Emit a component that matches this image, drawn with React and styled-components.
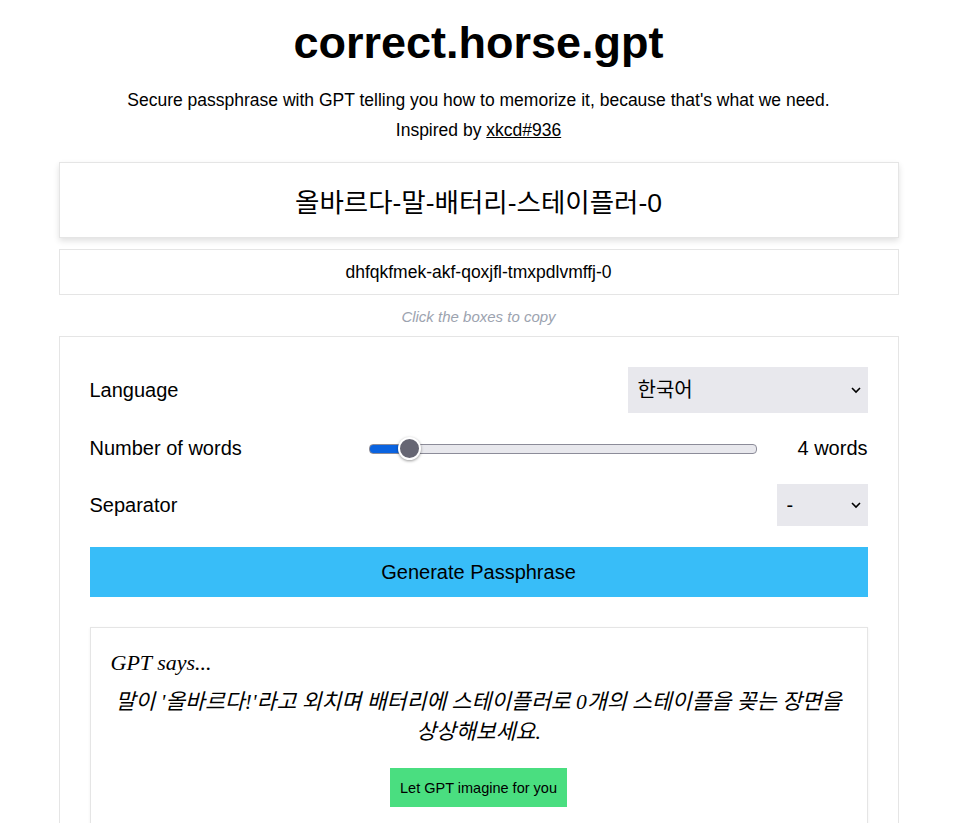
import { useState } from "react";
import styled, { createGlobalStyle } from "styled-components";

const GlobalStyle = createGlobalStyle`
  body {
    margin: 0;
    background: #fff;
    color: #000;
    font-family: "Liberation Sans", Arial, "Noto Sans CJK KR", sans-serif;
  }
`;

const Page = styled.div`
  width: 840px;
  margin-left: calc(50% - 423px);
  padding-top: 15px;
  text-align: center;
`;

const Title = styled.h1`
  font-size: 45px;
  font-weight: 700;
  margin: 0;
  line-height: 56px;
`;

const Subtitle = styled.p`
  font-size: 17.5px;
  margin: 14px 0 0;
  line-height: 30px;
`;

const Link = styled.a`
  color: #000;
  text-decoration: underline;
`;

const CopyBox = styled.div`
  border: 1px solid #e5e5e5;
  background: #fff;
  cursor: pointer;
  display: flex;
  align-items: center;
  justify-content: center;
  height: ${(p) => (p.$big ? "74px" : "44px")};
  font-size: ${(p) => (p.$big ? "26.5px" : "17.5px")};
  margin-top: ${(p) => (p.$big ? "17px" : "11px")};
  box-shadow: ${(p) => (p.$big ? "0 3px 6px rgba(0,0,0,0.12)" : "none")};
`;

const Hint = styled.p`
  font-size: 15px;
  line-height: 17px;
  font-style: italic;
  color: #9ca3af;
  margin: 13px 0 11px;
`;

const Panel = styled.div`
  border: 1px solid #e5e5e5;
  padding: 30px 30px 0;
  text-align: left;
`;

const Row = styled.div`
  display: flex;
  align-items: center;
  justify-content: space-between;
  gap: 24px;
  margin-bottom: ${(p) => p.$mb || "24px"};
  font-size: 20px;
`;

const Label = styled.label`
  flex: 0 0 auto;
`;

const Select = styled.select`
  appearance: none;
  border: none;
  background: #e8e8ed url("data:image/svg+xml,%3Csvg xmlns='http://www.w3.org/2000/svg' width='12' height='8' viewBox='0 0 12 8'%3E%3Cpath d='M2 2l4 4 4-4' fill='none' stroke='%23000' stroke-width='1.6'/%3E%3C/svg%3E") no-repeat right 6px center;
  font-family: "Liberation Sans", Arial, "Noto Sans CJK KR", sans-serif;
  font-size: 20px;
  color: #000;
  width: ${(p) => p.$w};
  height: ${(p) => p.$h};
  padding: 0 10px;
  outline: none;
`;

const SliderWrap = styled.div`
  display: flex;
  align-items: center;
  flex: 1;
  margin-left: 103px;
  gap: 40px;
`;

const Range = styled.input`
  appearance: none;
  flex: 1;
  height: 8px;
  margin: 0;
  border-radius: 4px;
  border: 1px solid #8c8c99;
  background: linear-gradient(to right, #0a63e0 0, #0a63e0 var(--fill), #e8e8ed var(--fill));
  &::-webkit-slider-thumb {
    appearance: none;
    width: 23px;
    height: 23px;
    border-radius: 50%;
    background: #666673;
    border: 2px solid #fff;
    box-shadow: 0 1px 3px rgba(0,0,0,0.4);
  }
`;

const Count = styled.span`
  white-space: nowrap;
`;

const Generate = styled.button`
  display: block;
  width: 100%;
  height: 50px;
  border: none;
  background: #38bdf8;
  font-family: "Liberation Sans", Arial, sans-serif;
  font-size: 20px;
  color: #000;
  cursor: pointer;
`;

const GptCard = styled.div`
  margin-top: 30px;
  border: 1px solid #e5e5e5;
  box-shadow: 0 1px 3px rgba(0,0,0,0.06);
  padding: 22px 20px 30px;
  text-align: center;
`;

const GptTitle = styled.p`
  margin: 0;
  text-align: left;
  font-family: "Liberation Serif", "Times New Roman", serif;
  font-style: italic;
  font-size: 22px;
  line-height: 25px;
`;

const GptText = styled.p`
  margin: 12px 0 0;
  font-family: "Liberation Serif", "Noto Sans CJK KR", serif;
  font-style: italic;
  font-size: 21.6px;
  line-height: 30px;
  word-break: keep-all;
`;

const GptButton = styled.button`
  margin-top: 21px;
  border: none;
  background: #4ade80;
  height: 39px;
  padding: 0 10px;
  font-family: "Liberation Sans", Arial, sans-serif;
  font-size: 14.5px;
  color: #000;
  cursor: pointer;
`;

export default function App() {
  const [words, setWords] = useState(4);
  const min = 3;
  const max = 16;
  const fill = ((words - min) / (max - min)) * 100;
  return (
    <>
      <GlobalStyle />
      <Page>
        <Title>correct.horse.gpt</Title>
        <Subtitle>
          Secure passphrase with GPT telling you how to memorize it, because that's what we need.
          <br />
          Inspired by <Link href="#">xkcd#936</Link>
        </Subtitle>
        <CopyBox $big>올바르다-말-배터리-스테이플러-0</CopyBox>
        <CopyBox>dhfqkfmek-akf-qoxjfl-tmxpdlvmffj-0</CopyBox>
        <Hint>Click the boxes to copy</Hint>
        <Panel>
          <Row>
            <Label>Language</Label>
            <Select $w="240px" $h="46px" defaultValue="ko">
              <option value="ko">한국어</option>
              <option value="en">English</option>
            </Select>
          </Row>
          <Row>
            <Label>Number of words</Label>
            <SliderWrap>
              <Range
                type="range"
                min={min}
                max={max}
                value={words}
                onChange={(e) => setWords(Number(e.target.value))}
                style={{ "--fill": fill + "%" }}
              />
              <Count>{words} words</Count>
            </SliderWrap>
          </Row>
          <Row $mb="21px">
            <Label>Separator</Label>
            <Select $w="91px" $h="42px" defaultValue="-">
              <option value="-">-</option>
              <option value="_">_</option>
            </Select>
          </Row>
          <Generate>Generate Passphrase</Generate>
          <GptCard>
            <GptTitle>GPT says...</GptTitle>
            <GptText>
              말이 '올바르다!'라고 외치며 배터리에 스테이플러로 0개의 스테이플을 꽂는 장면을 상상해보세요.
            </GptText>
            <GptButton>Let GPT imagine for you</GptButton>
          </GptCard>
        </Panel>
      </Page>
    </>
  );
}
